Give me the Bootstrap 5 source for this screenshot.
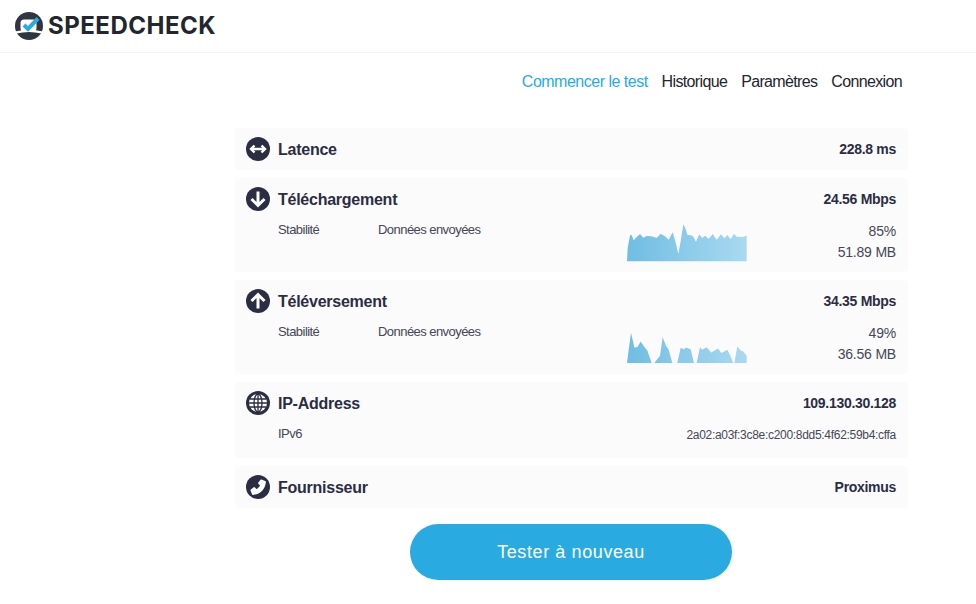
<!DOCTYPE html>
<html lang="fr">
<head>
  <meta charset="UTF-8" />
  <meta name="viewport" content="width=device-width, initial-scale=1" />
  <title>Speedcheck</title>
  <link href="https://cdn.jsdelivr.net/npm/bootstrap@5.3.2/dist/css/bootstrap.min.css" rel="stylesheet">
  <style>
    body { font-family: "Liberation Sans", Arial, sans-serif; color: #2b2d42; background: #fff; }
    .top-bar { height: 53px; padding: 12px 15px; border-bottom: 1px solid #f4f4f4; }
    .brand-name { font-family: Inter, sans-serif; font-weight: 700; font-size: 24px; line-height: 28px; color: #23252f; letter-spacing: .5px; margin-left: 5px; }
    .menu-row { margin: 0 74px 0 235px; padding-top: 19px; height: 75px; justify-content: flex-end; gap: 14px; font-size: 16px; line-height: 20px; letter-spacing: -.65px; }
    .menu-row a { color: #23252f; text-decoration: none; }
    .menu-row a.current { color: #29abe2; letter-spacing: -.5px; }
    .result-list { margin: 0 68px 0 235px; gap: 8px; }
    .result-box { background: #fbfbfc; border-radius: 4px; padding: 9px 12px 0 11px; }
    .box-head { height: 24px; }
    .round-icon { width: 24px; height: 24px; margin-right: 8px; flex: none; }
    .box-title { font-size: 16px; font-weight: 700; letter-spacing: -.25px; color: #2b2d42; padding-top: 2px; }
    .box-value { font-size: 14px; font-weight: 700; letter-spacing: -.3px; color: #2b2d42; padding-top: 1px; }
    .box-detail { margin-left: 32px; font-size: 13px; line-height: 19px; letter-spacing: -.55px; color: #454754; }
    .box-lat { height: 42px; }
    .box-speed { height: 94px; }
    .box-ip { height: 76px; }
    .col-stab { width: 100px; padding-top: 9px; }
    .col-data { width: 249px; padding-top: 9px; }
    .spark-down { width: 120px; height: 39px; margin-top: 12px; }
    .spark-up { width: 120px; height: 33px; margin-top: 17px; }
    .detail-nums { flex: 1; text-align: right; font-size: 14px; line-height: 21px; letter-spacing: -.2px; color: #454754; margin-top: 10px; }
    .ip-row { margin-top: 9px; }
    .ip-line { font-size: 12px; letter-spacing: -.3px; padding-top: 2px; }
    .again-btn { display: block; width: 322px; height: 56px; margin: 16px 0 0 410px; border: 0; border-radius: 28px; background: #29abe2; color: #fff; font-family: "Liberation Sans", Arial, sans-serif; font-size: 18px; letter-spacing: .6px; }
  </style>
</head>
<body>

<header class="top-bar d-flex align-items-center">
  <svg width="28" height="28" viewBox="0 0 28 28" aria-hidden="true">
    <circle cx="14" cy="14" r="14" fill="#2f3541"/>
    <path d="M0 19.5 Q14 16 28 19.5 L26.5 21.5 Q14 18.5 1.5 21.5 Z" fill="#fff"/>
    <rect x="5.5" y="7.5" width="16" height="12" rx="3.5" fill="#fff"/>
    <path d="M9 13 L13 17 L23 6.5" fill="none" stroke="#29abe2" stroke-width="4"/>
  </svg>
  <span class="brand-name">SPEEDCHECK</span>
</header>

<nav class="menu-row d-flex">
  <a class="current" href="#">Commencer le test</a>
  <a href="#">Historique</a>
  <a href="#">Paramètres</a>
  <a href="#">Connexion</a>
</nav>

<main>
  <div class="result-list d-flex flex-column">

    <section class="result-box box-lat">
      <div class="box-head d-flex align-items-center">
        <svg class="round-icon" viewBox="0 0 24 24" aria-hidden="true">
          <circle cx="12" cy="12" r="12" fill="#2b2d42"/>
          <path d="M6 12 H18 M8.5 8.5 L5 12 L8.5 15.5 M15.5 8.5 L19 12 L15.5 15.5" fill="none" stroke="#fff" stroke-width="2.4"/>
        </svg>
        <span class="box-title">Latence</span>
        <span class="box-value ms-auto">228.8 ms</span>
      </div>
    </section>

    <section class="result-box box-speed">
      <div class="box-head d-flex align-items-center">
        <svg class="round-icon" viewBox="0 0 24 24" aria-hidden="true">
          <circle cx="12" cy="12" r="12" fill="#2b2d42"/>
          <path d="M12 4.5 V18.5 M5.5 12 L12 18.5 L18.5 12" fill="none" stroke="#fff" stroke-width="3"/>
        </svg>
        <span class="box-title">Téléchargement</span>
        <span class="box-value ms-auto">24.56 Mbps</span>
      </div>
      <div class="box-detail d-flex">
        <div class="col-stab">Stabilité</div>
        <div class="col-data">Données envoyées</div>
        <svg class="spark-down" viewBox="51 40 360 117" preserveAspectRatio="none" aria-hidden="true">
          <defs>
            <linearGradient id="fillSpark" x1="0" y1="0" x2="1" y2="0">
              <stop offset="0" stop-color="#70bde3"/>
              <stop offset="1" stop-color="#a9d9f1"/>
            </linearGradient>
          </defs>
          <path fill="url(#fillSpark)" d="M51 155 L53 115 L60 77 L65 76 L71 92 L80 82 L90 73 L100 84 L110 79 L125 80 L140 85 L152 72 L165 80 L176 90 L188 68 L196 95 L205 132 L212 95 L220 44 L226 55 L232 75 L248 78 L258 96 L268 74 L276 85 L286 78 L296 88 L308 73 L320 90 L333 74 L343 86 L352 76 L362 88 L372 72 L380 81 L398 82 L410 78 L410 155 Z"/>
        </svg>
        <div class="detail-nums">85%<br>51.89 MB</div>
      </div>
    </section>

    <section class="result-box box-speed">
      <div class="box-head d-flex align-items-center">
        <svg class="round-icon" viewBox="0 0 24 24" aria-hidden="true">
          <circle cx="12" cy="12" r="12" fill="#2b2d42"/>
          <path d="M12 19.5 V5.5 M5.5 12 L12 5.5 L18.5 12" fill="none" stroke="#fff" stroke-width="3"/>
        </svg>
        <span class="box-title">Téléversement</span>
        <span class="box-value ms-auto">34.35 Mbps</span>
      </div>
      <div class="box-detail d-flex">
        <div class="col-stab">Stabilité</div>
        <div class="col-data">Données envoyées</div>
        <svg class="spark-up" viewBox="51 30 360 100" preserveAspectRatio="none" aria-hidden="true">
          <path fill="url(#fillSpark)" d="M51 130 L56 90 L63 38 L68 60 L73 83 L82 82 L92 65 L102 80 L112 92 L125 130 L133 130 L150 108 L158 52 L168 78 L176 90 L187 130 L202 130 L212 84 L222 88 L228 83 L242 88 L252 130 L260 130 L270 82 L276 90 L290 82 L304 98 L324 86 L334 100 L352 90 L362 110 L370 130 L373 130 L382 80 L392 92 L400 95 L410 108 L410 130 Z"/>
        </svg>
        <div class="detail-nums">49%<br>36.56 MB</div>
      </div>
    </section>

    <section class="result-box box-ip">
      <div class="box-head d-flex align-items-center">
        <svg class="round-icon" viewBox="0 0 24 24" aria-hidden="true">
          <circle cx="12" cy="12" r="12" fill="#2b2d42"/>
          <circle cx="12" cy="12" r="9" fill="#fff"/>
          <g fill="none" stroke="#2b2d42" stroke-width="1.3">
            <ellipse cx="12" cy="12" rx="4" ry="9"/>
            <path d="M12 3 V21 M3 12 H21 M4 8 H20 M4 16 H20"/>
          </g>
        </svg>
        <span class="box-title">IP-Address</span>
        <span class="box-value ms-auto">109.130.30.128</span>
      </div>
      <div class="box-detail ip-row d-flex justify-content-between">
        <div>IPv6</div>
        <div class="ip-line">2a02:a03f:3c8e:c200:8dd5:4f62:59b4:cffa</div>
      </div>
    </section>

    <section class="result-box box-lat">
      <div class="box-head d-flex align-items-center">
        <svg class="round-icon" viewBox="0 0 24 24" aria-hidden="true">
          <circle cx="12" cy="12" r="12" fill="#2b2d42"/>
          <path fill="#fff" d="M15.5 4.5 L19.2 6 Q20 6.4 19.9 7.2 C19 14.5 14.5 19 7.2 19.9 Q6.4 20 6 19.2 L4.5 15.5 Q4.3 14.9 4.8 14.5 L7.7 12.2 Q8.2 11.9 8.7 12.3 L10.4 14 C12 13.2 13.2 12 14 10.4 L12.3 8.7 Q11.9 8.2 12.2 7.7 L14.5 4.8 Q14.9 4.3 15.5 4.5 Z"/>
        </svg>
        <span class="box-title">Fournisseur</span>
        <span class="box-value ms-auto">Proximus</span>
      </div>
    </section>

  </div>
  <button type="button" class="again-btn">Tester à nouveau</button>
</main>

<script src="https://cdn.jsdelivr.net/npm/bootstrap@5.3.2/dist/js/bootstrap.bundle.min.js"></script>
</body>
</html>
